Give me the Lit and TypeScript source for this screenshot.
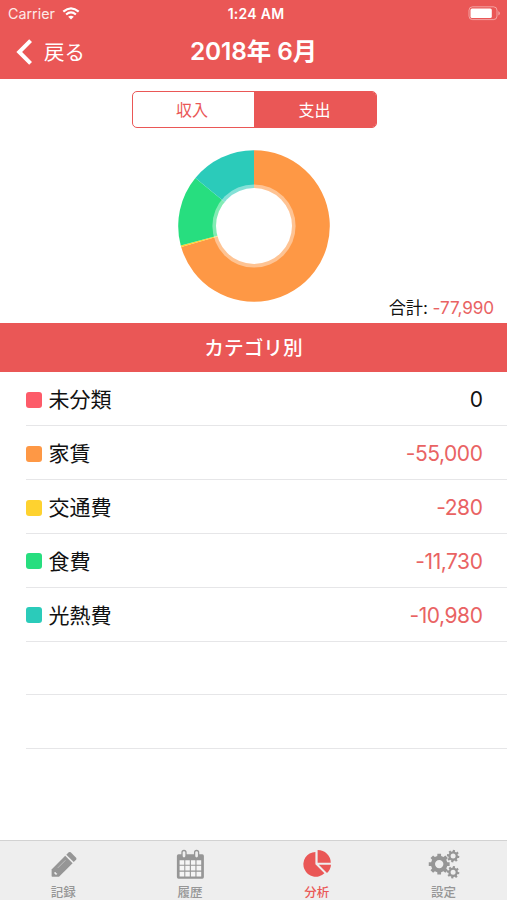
import { LitElement, html, css, svg } from "lit";
import { customElement, state } from "lit/decorators.js";
import { classMap } from "lit/directives/class-map.js";
import { styleMap } from "lit/directives/style-map.js";

interface Category {
  name: string;
  amount: number;
  color: string;
}

const CATEGORIES: Category[] = [
  { name: "未分類", amount: 0, color: "#fd5b69" },
  { name: "家賃", amount: -55000, color: "#fe9845" },
  { name: "交通費", amount: -280, color: "#fed22f" },
  { name: "食費", amount: -11730, color: "#27de7f" },
  { name: "光熱費", amount: -10980, color: "#2bcbba" },
];

const format = (n: number) => n.toLocaleString("en-US");

/** Outline of a cog wheel with a round hole. */
function gear(cx: number, cy: number, outer: number, root: number, hole: number, turn = 0) {
  const teeth = 8;
  const step = (Math.PI * 2) / teeth;
  const at = (r: number, a: number) =>
    `${(cx + r * Math.cos(a)).toFixed(2)} ${(cy + r * Math.sin(a)).toFixed(2)}`;
  const points: string[] = [];
  for (let i = 0; i < teeth; i++) {
    const a = i * step + turn;
    points.push(at(root, a - step * 0.3), at(outer, a - step * 0.22));
    points.push(at(outer, a + step * 0.22), at(root, a + step * 0.3));
  }
  return `M${points.join("L")}Z M${cx - hole} ${cy}a${hole} ${hole} 0 1 0 ${hole * 2} 0a${hole} ${hole} 0 1 0 ${-hole * 2} 0Z`;
}

const ICONS = {
  pencil: svg`
    <path fill="currentColor" d="M5.6 22.4 19.2 8.8 26.6 16.2 13 29.8H6.2L5.6 29.2Z"/>
    <path fill="currentColor" d="M20.3 7.7 22.7 5.3Q23.7 4.5 24.7 5.3L30.1 10.7Q30.9 11.7 30.1 12.7L27.7 15.1Z"/>
    <path fill="none" stroke="#c8c8c8" stroke-width=".8" d="M11.8 20.9 19.4 13.3"/>
    <path fill="#eee" d="M8.4 25.2 9.5 24.9 10.1 26 11.3 26.7 10.9 27.5 9.7 27.7 8.2 26.3Z"/>`,
  calendar: svg`
    <rect x="3.9" y="7.3" width="27" height="24.4" rx="1.6" fill="currentColor"/>
    <path fill="#f5f5f5" d="M6.6 13.2h4.7v4.5H6.6zM12.3 13.2h4.5v4.5h-4.5zM17.9 13.2h4.5v4.5h-4.5zM23.5 13.2h4.7v4.5h-4.7zM6.6 18.8h4.7v4.8H6.6zM12.3 18.8h4.5v4.8h-4.5zM17.9 18.8h4.5v4.8h-4.5zM23.5 18.8h4.7v4.8h-4.7zM6.6 24.8h4.7v4.6H6.6zM12.3 24.8h4.5v4.6h-4.5zM17.9 24.8h4.5v4.6h-4.5zM23.5 24.8h4.7v4.6h-4.7z"/>
    <rect x="9" y="3.5" width="4" height="7.6" rx="2" fill="#eee" stroke="currentColor" stroke-width="1.3"/>
    <rect x="21.6" y="3.5" width="4" height="7.6" rx="2" fill="#eee" stroke="currentColor" stroke-width="1.3"/>`,
  pie: svg`
    <path fill="currentColor" d="M15.4 4.9A12.4 12.4 0 1 0 24.4 26.2L15.4 17.3Z"/>
    <path fill="currentColor" d="M17.6 3A13 12.8 0 0 1 30.8 15.8H17.6Z"/>
    <path fill="currentColor" d="M18.8 17.8H31Q30.7 22.6 27 26Z"/>`,
  gears: svg`
    <path fill="currentColor" fill-rule="evenodd" d="${gear(12.2, 17.1, 10.6, 8.3, 4.2)}"/>
    <path fill="currentColor" fill-rule="evenodd" d="${gear(26.1, 9.1, 6.3, 4.8, 2.5, 0.15)}"/>
    <path fill="currentColor" fill-rule="evenodd" d="${gear(26.1, 25.3, 6.3, 4.8, 2.5, 0.15)}"/>`,
};

const TABS: { label: string; icon: keyof typeof ICONS }[] = [
  { label: "記録", icon: "pencil" },
  { label: "履歴", icon: "calendar" },
  { label: "分析", icon: "pie" },
  { label: "設定", icon: "gears" },
];

@customElement("donut-chart")
class DonutChart extends LitElement {
  static properties = { items: { attribute: false } };
  declare items: Category[];

  static styles = css`
    :host { display: block; }
    svg { display: block; }
  `;

  render() {
    const total = this.items.reduce((s, c) => s + Math.abs(c.amount), 0);
    const point = (f: number) =>
      `${76 + 75.8 * Math.sin(f * Math.PI * 2)} ${76 - 75.8 * Math.cos(f * Math.PI * 2)}`;
    let start = 0;
    const slices = this.items
      .filter((c) => c.amount !== 0)
      .map((c) => {
        const size = Math.abs(c.amount) / total;
        const end = start + size;
        const d = `M76 76L${point(start)}A75.8 75.8 0 ${size > 0.5 ? 1 : 0} 1 ${point(end)}Z`;
        start = end;
        return svg`<path d=${d} fill=${c.color}/>`;
      });
    return html`<svg width="152" height="152" viewBox="0 0 152 152">
      ${slices}
      <circle cx="76" cy="76" r="41.6" fill="#fff" fill-opacity=".42"/>
      <circle cx="76" cy="76" r="38" fill="#fff"/>
    </svg>`;
  }
}

@customElement("app-root")
class AppRoot extends LitElement {
  @state() private mode = "支出";
  @state() private tab = "分析";

  static styles = css`
    :host {
      display: flex;
      flex-direction: column;
      height: 900px;
      overflow: hidden;
      box-sizing: border-box;
      background: #fff;
      color: #111;
      font-family: Inter, "Noto Sans CJK JP", sans-serif;
      line-height: 1;
    }
    * { box-sizing: border-box; }
    svg { display: block; }
    .top { background: #ea5756; color: #fff; height: 79px; flex: none; }
    .status, .nav { display: grid; grid-template-columns: 1fr auto 1fr; align-items: center; }
    .status { height: 27px; padding: 0 6px 0 8px; font-size: 14.3px; }
    .carrier { display: flex; align-items: center; gap: 7px; color: #fde9e8; padding-top: 1px; }
    .clock { font-weight: 600; font-size: 14px; letter-spacing: .25px; padding: 1px 0 0 3px; }
    .battery { justify-self: end; }
    .nav { height: 50px; padding: 0 16px; }
    .back { display: flex; align-items: center; gap: 12px; font-size: 20.5px; }
    .back span { padding-top: 2px; }
    .title { font-size: 24.4px; font-weight: 600; letter-spacing: -.1px; margin-top: -2px; white-space: nowrap; }
    .chart { height: 244px; flex: none; display: flex; flex-direction: column; align-items: center; padding-top: 12px; }
    .segment { display: grid; grid-template-columns: 121px 1fr; width: 245px; height: 37px; margin-left: 1px; border: 1.5px solid #ea5756; border-radius: 5px; overflow: hidden; }
    .option { display: flex; align-items: center; justify-content: center; font-size: 16px; color: #ea5756; }
    .option:first-child { padding-right: 2px; }
    .option.on { background: #ea5756; color: #fff; }
    donut-chart { margin-top: 21.6px; }
    .total { align-self: flex-end; padding-right: 13px; margin-top: -3.6px; font-size: 17.2px; line-height: 19px; white-space: pre; letter-spacing: -.1px; }
    .negative { color: #e96363; }
    .heading { flex: none; height: 49px; padding-top: 2px; display: flex; align-items: center; justify-content: center; background: #ea5756; color: #fff; font-size: 19.7px; font-weight: 500; }
    .list { flex: 1; padding-top: .6px; }
    .row { height: 53.8px; margin-left: 26px; padding: 2px 25px 0 0; border-bottom: 1px solid #e6e6e8; display: flex; align-items: center; font-size: 21px; }
    .swatch { width: 16px; height: 16px; border-radius: 3px; margin: 0 6px 0 .4px; }
    .name { flex: 1; }
    .amount { letter-spacing: -.45px; margin-right: -.45px; }
    .tabs { flex: none; height: 60.5px; display: grid; grid-template-columns: repeat(4, 1fr); background: #eee; border-top: 1px solid #d2d2d2; }
    .tab { display: flex; flex-direction: column; align-items: center; padding-top: 6px; color: #969696; font-size: 12.5px; font-weight: 500; gap: 6px; }
    .tab.on { color: #ea5756; }
  `;

  render() {
    return html`
      <header class="top">
        <div class="status">
          <div class="carrier">
            <span>Carrier</span>
            <svg width="18" height="13" viewBox="0 0 18 13" fill="none" stroke="#fff" stroke-width="2.2">
              <path d="M1.3 4.6Q9-2 16.7 4.6M4.1 7.5Q9 3.3 13.9 7.5"/>
              <path fill="#fff" stroke="none" d="M9 12.6 6.2 9.8Q9 7.6 11.8 9.8Z"/>
            </svg>
          </div>
          <span class="clock">1:24 AM</span>
          <svg class="battery" width="33" height="15" viewBox="0 0 33 15">
            <rect x="1" y=".8" width="28" height="12.8" rx="3.5" fill="none" stroke="#fff" stroke-opacity=".45"/>
            <rect x="2.5" y="2.5" width="21.3" height="9.4" rx="1.5" fill="#fff"/>
            <path d="M30.4 5v4.6q3-2.3 0-4.6Z" fill="#fff" fill-opacity=".5"/>
          </svg>
        </div>
        <div class="nav">
          <div class="back">
            <svg width="16" height="26" viewBox="0 0 16 26" fill="none" stroke="#fff" stroke-width="4">
              <path d="M14.6 1.6 3.2 13 14.6 24.4"/>
            </svg>
            <span>戻る</span>
          </div>
          <span class="title">2018年 6月</span>
        </div>
      </header>
      <section class="chart">
        <div class="segment">
          ${["収入", "支出"].map(
            (m) => html`<div class=${classMap({ option: true, on: m === this.mode })} @click=${() => (this.mode = m)}>${m}</div>`
          )}
        </div>
        <donut-chart .items=${CATEGORIES}></donut-chart>
        <div class="total">合計: <span class="negative">${format(CATEGORIES.reduce((s, c) => s + c.amount, 0))}</span></div>
      </section>
      <div class="heading">カテゴリ別</div>
      <main class="list">
        ${CATEGORIES.map(
          (c) => html`<div class="row">
            <span class="swatch" style=${styleMap({ background: c.color })}></span>
            <span class="name">${c.name}</span>
            <span class=${classMap({ amount: true, negative: c.amount < 0 })}>${format(c.amount)}</span>
          </div>`
        )}
        <div class="row"></div>
        <div class="row"></div>
      </main>
      <nav class="tabs">
        ${TABS.map(
          (t) => html`<div class=${classMap({ tab: true, on: t.label === this.tab })} @click=${() => (this.tab = t.label)}>
            <svg width="34" height="34" viewBox="0 0 34 34">${ICONS[t.icon]}</svg>
            <span>${t.label}</span>
          </div>`
        )}
      </nav>
    `;
  }
}
